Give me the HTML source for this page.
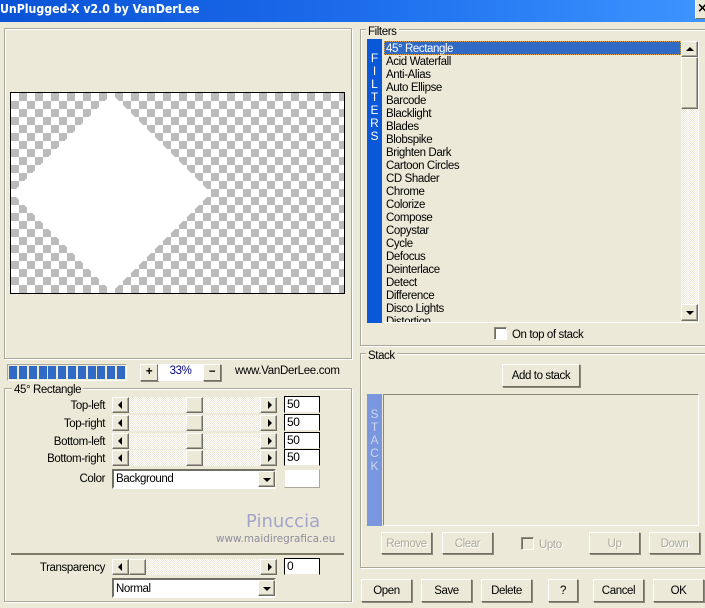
<!DOCTYPE html>
<html><head><meta charset="utf-8"><style>
html,body{margin:0;padding:0}
body{width:705px;height:608px;overflow:hidden;background:#ece9d8;position:relative;font:11.5px "Liberation Sans",sans-serif;letter-spacing:-.4px;color:#000}
div,span{position:absolute;box-sizing:border-box;white-space:nowrap}
.title{left:0;top:0;width:705px;height:22px;background:linear-gradient(90deg,#0a53d6,#1c6cec 50%,#3d95ff)}
.title span{left:0;top:0;color:#fff;font:bold 12px "DejaVu Sans",sans-serif;letter-spacing:0;line-height:19px;transform:scaleX(.915);transform-origin:0 0}
.grp{border:1px solid #aca899;box-shadow:1px 1px 0 #fff,inset 1px 1px 0 #fff}
.lb{background:#ece9d8;padding:0 2px;line-height:15px;height:13px}
.t{line-height:16px;height:14px}
.r{text-align:right;left:4px;width:101px}
.btn{background:#ece9d8;border:1px solid;border-color:#fff #716f64 #716f64 #fff;box-shadow:1px 1px 0 #8b897c;text-align:center;line-height:22px;width:51px;height:22px}
.dis{color:#aca899;text-shadow:1px 1px 0 #fff}
.sb{background:#ece9d8;border:1px solid;border-color:#fff #716f64 #716f64 #fff;box-shadow:inset -1px -1px 0 #aca899;width:17px;height:16px}
.track{background:conic-gradient(#ece9d8 25%,#fff 0 50%,#ece9d8 0 75%,#fff 0) 0 0/2px 2px}
.al,.ar,.au,.ad{width:0;height:0;border-style:solid;border-color:transparent}
.al{left:5px;top:3px;border-width:4px 4px 4px 0;border-right-color:#000}
.ar{left:7px;top:3px;border-width:4px 0 4px 4px;border-left-color:#000}
.au{left:4px;top:5px;border-width:0 4px 4px;border-bottom-color:#000}
.ad{left:4px;top:6px;border-width:4px 4px 0;border-top-color:#000}
.inp{background:#fff;border:1px solid;border-color:#000 #000 #ece9d8 #000;left:284px;width:36px;height:17px;line-height:14px;padding-left:2px;font-size:12px}
.cb{left:112px;width:164px;height:20px;background:#fff;border:2px solid;border-color:#716f64 #f5f4ee #fff #716f64;line-height:16px;padding-left:2px}
.cb .sb{right:-1px;top:0;left:auto;width:17px;height:16px}
.li{left:386px;line-height:15px;height:13px}
.v{left:367px;width:15px;color:#fff;text-align:center;line-height:13px;height:13px;font-size:12px;letter-spacing:0}
.chk{width:13px;height:13px;background:#fff;border:1px solid;border-color:#8b897c #fff #fff #8b897c;box-shadow:inset 1px 1px 0 #716f64}
.seg{top:366px;width:8px;height:13px;background:#316ac5}
</style></head><body>
<div class="title"><span>UnPlugged-X v2.0 by VanDerLee</span></div>
<div style="left:695px;top:0;width:10px;height:19px;background:#ece9d8;border-left:1px solid #fff;border-bottom:1px solid #716f64;font:bold 13px 'DejaVu Sans',sans-serif;line-height:18px;overflow:hidden;padding-left:1px">×</div>

<div class="grp" style="left:4px;top:28px;width:348px;height:331px"></div>
<div style="left:10px;top:92px;width:335px;height:202px;border:1px solid #000;background:conic-gradient(#bbb 25%,#fff 0 50%,#bbb 0 75%,#fff 0) 0 0/16px 16px"></div>
<svg style="position:absolute;left:0;top:0" width="352" height="300"><polygon points="112,94 211,193 112,292 12,193" fill="#fff"/></svg>

<div style="left:7px;top:364px;width:120px;height:17px;border:1px solid;border-color:#aca899 #fff #fff #aca899"></div>
<div class="seg" style="left:9px"></div><div class="seg" style="left:19px"></div><div class="seg" style="left:29px"></div><div class="seg" style="left:39px"></div><div class="seg" style="left:48px"></div><div class="seg" style="left:58px"></div><div class="seg" style="left:68px"></div><div class="seg" style="left:78px"></div><div class="seg" style="left:88px"></div><div class="seg" style="left:97px"></div><div class="seg" style="left:107px"></div><div class="seg" style="left:117px"></div>
<div class="btn" style="left:140px;top:364px;width:18px;height:17px;line-height:14px;font-weight:bold">+</div>
<div style="left:158px;top:364px;width:45px;height:17px;background:#fff;color:#00007f;text-align:center;line-height:15px">33%</div>
<div class="btn" style="left:203px;top:364px;width:18px;height:17px;line-height:14px;font-weight:bold">−</div>
<div class="t" style="left:235px;top:363px;font-size:11.5px;letter-spacing:-.3px">www.VanDerLee.com</div>

<div class="grp" style="left:4px;top:388px;width:348px;height:214px"></div>
<div class="lb" style="left:12px;top:383px">45° Rectangle</div>

<div class="t r" style="top:398px">Top-left</div>
<div class="track" style="left:129px;top:397px;width:131px;height:16px"></div>
<div class="sb" style="left:112px;top:397px"><span class="al"></span></div><div class="sb" style="left:186px;top:397px"></div><div class="sb" style="left:260px;top:397px"><span class="ar"></span></div>
<div class="inp" style="top:396px">50</div>

<div class="t r" style="top:416px">Top-right</div>
<div class="track" style="left:129px;top:415px;width:131px;height:16px"></div>
<div class="sb" style="left:112px;top:415px"><span class="al"></span></div><div class="sb" style="left:186px;top:415px"></div><div class="sb" style="left:260px;top:415px"><span class="ar"></span></div>
<div class="inp" style="top:414px">50</div>

<div class="t r" style="top:434px">Bottom-left</div>
<div class="track" style="left:129px;top:433px;width:131px;height:16px"></div>
<div class="sb" style="left:112px;top:433px"><span class="al"></span></div><div class="sb" style="left:186px;top:433px"></div><div class="sb" style="left:260px;top:433px"><span class="ar"></span></div>
<div class="inp" style="top:432px">50</div>

<div class="t r" style="top:451px">Bottom-right</div>
<div class="track" style="left:129px;top:450px;width:131px;height:16px"></div>
<div class="sb" style="left:112px;top:450px"><span class="al"></span></div><div class="sb" style="left:186px;top:450px"></div><div class="sb" style="left:260px;top:450px"><span class="ar"></span></div>
<div class="inp" style="top:449px">50</div>

<div class="t r" style="top:471px">Color</div>
<div class="cb" style="top:469px">Background<div class="sb"><span class="ad"></span></div></div>
<div style="left:284px;top:469px;width:36px;height:19px;background:#fff;border:1px solid;border-color:#ece9d8 #aca899 #aca899 #ece9d8"></div>

<div style="left:246px;top:511px;font:18px/22px 'DejaVu Sans',sans-serif;color:#a3a5c8;letter-spacing:0">Pinuccia</div>
<div style="left:216px;top:532px;font:10.4px/14px 'DejaVu Sans',sans-serif;color:#8d8d9c;letter-spacing:0">www.maidiregrafica.eu</div>

<div style="left:11px;top:553px;width:333px;height:2px;background:#7d7a68"></div>
<div class="t r" style="top:560px">Transparency</div>
<div class="track" style="left:129px;top:559px;width:131px;height:16px"></div>
<div class="sb" style="left:112px;top:559px"><span class="al"></span></div><div class="sb" style="left:129px;top:559px"></div><div class="sb" style="left:260px;top:559px"><span class="ar"></span></div>
<div class="inp" style="top:558px">0</div>
<div class="cb" style="top:578px;line-height:18px">Normal<div class="sb"><span class="ad"></span></div></div>

<div class="grp" style="left:360px;top:29px;width:346px;height:317px"></div>
<div class="lb" style="left:366px;top:25px">Filters</div>
<div style="left:367px;top:39px;width:15px;height:284px;background:#0a57d8"></div>
<div class="v" style="top:52px">F</div><div class="v" style="top:65px">I</div><div class="v" style="top:78px">L</div><div class="v" style="top:91px">T</div><div class="v" style="top:104px">E</div><div class="v" style="top:117px">R</div><div class="v" style="top:130px">S</div>
<div style="left:383px;top:40px;width:316px;height:283px;border:1px solid;border-color:#ece9d8 #fff #fff #ece9d8;overflow:hidden"></div>
<div style="left:384px;top:41px;width:297px;height:14px;background:#316ac5;border:1px dotted #e8a33a;color:#fff;line-height:14px;padding-left:1px">45° Rectangle</div>
<div class="li" style="top:55px">Acid Waterfall</div>
<div class="li" style="top:68px">Anti-Alias</div>
<div class="li" style="top:81px">Auto Ellipse</div>
<div class="li" style="top:94px">Barcode</div>
<div class="li" style="top:107px">Blacklight</div>
<div class="li" style="top:120px">Blades</div>
<div class="li" style="top:133px">Blobspike</div>
<div class="li" style="top:146px">Brighten Dark</div>
<div class="li" style="top:159px">Cartoon Circles</div>
<div class="li" style="top:172px">CD Shader</div>
<div class="li" style="top:185px">Chrome</div>
<div class="li" style="top:198px">Colorize</div>
<div class="li" style="top:211px">Compose</div>
<div class="li" style="top:224px">Copystar</div>
<div class="li" style="top:237px">Cycle</div>
<div class="li" style="top:250px">Defocus</div>
<div class="li" style="top:263px">Deinterlace</div>
<div class="li" style="top:276px">Detect</div>
<div class="li" style="top:289px">Difference</div>
<div class="li" style="top:302px">Disco Lights</div>
<div class="li" style="top:315px;height:7px;overflow:hidden">Distortion</div>
<div class="track" style="left:681px;top:41px;width:17px;height:280px"></div>
<div class="sb" style="left:681px;top:41px"><span class="au"></span></div>
<div class="sb" style="left:681px;top:57px;height:52px"></div>
<div class="sb" style="left:681px;top:304px;height:17px"><span class="ad"></span></div>

<div class="chk" style="left:494px;top:327px"></div>
<div class="t" style="left:512px;top:327px">On top of stack</div>

<div class="grp" style="left:360px;top:353px;width:346px;height:215px"></div>
<div class="lb" style="left:366px;top:349px">Stack</div>
<div class="btn" style="left:502px;top:364px;width:78px;height:23px;line-height:22px">Add to stack</div>
<div style="left:367px;top:394px;width:15px;height:132px;background:#7a96df"></div>
<div class="v" style="top:408px;color:#c9d5f2">S</div><div class="v" style="top:421px;color:#c9d5f2">T</div><div class="v" style="top:434px;color:#c9d5f2">A</div><div class="v" style="top:447px;color:#c9d5f2">C</div><div class="v" style="top:460px;color:#c9d5f2">K</div>
<div style="left:383px;top:394px;width:316px;height:132px;border:1px solid;border-color:#8b897c #fff #fff #8b897c"></div>

<div class="btn dis" style="left:381px;top:532px">Remove</div>
<div class="btn dis" style="left:442px;top:532px">Clear</div>
<div class="chk" style="left:521px;top:537px;background:#ece9d8"></div>
<div class="t dis" style="left:539px;top:537px">Upto</div>
<div class="btn dis" style="left:589px;top:532px">Up</div>
<div class="btn dis" style="left:649px;top:532px">Down</div>

<div class="btn" style="left:361px;top:579px;height:23px">Open</div>
<div class="btn" style="left:421px;top:579px;height:23px">Save</div>
<div class="btn" style="left:481px;top:579px;height:23px">Delete</div>
<div class="btn" style="left:548px;top:579px;width:30px;height:23px">?</div>
<div class="btn" style="left:593px;top:579px;height:23px">Cancel</div>
<div class="btn" style="left:653px;top:579px;height:23px">OK</div>
</body></html>
